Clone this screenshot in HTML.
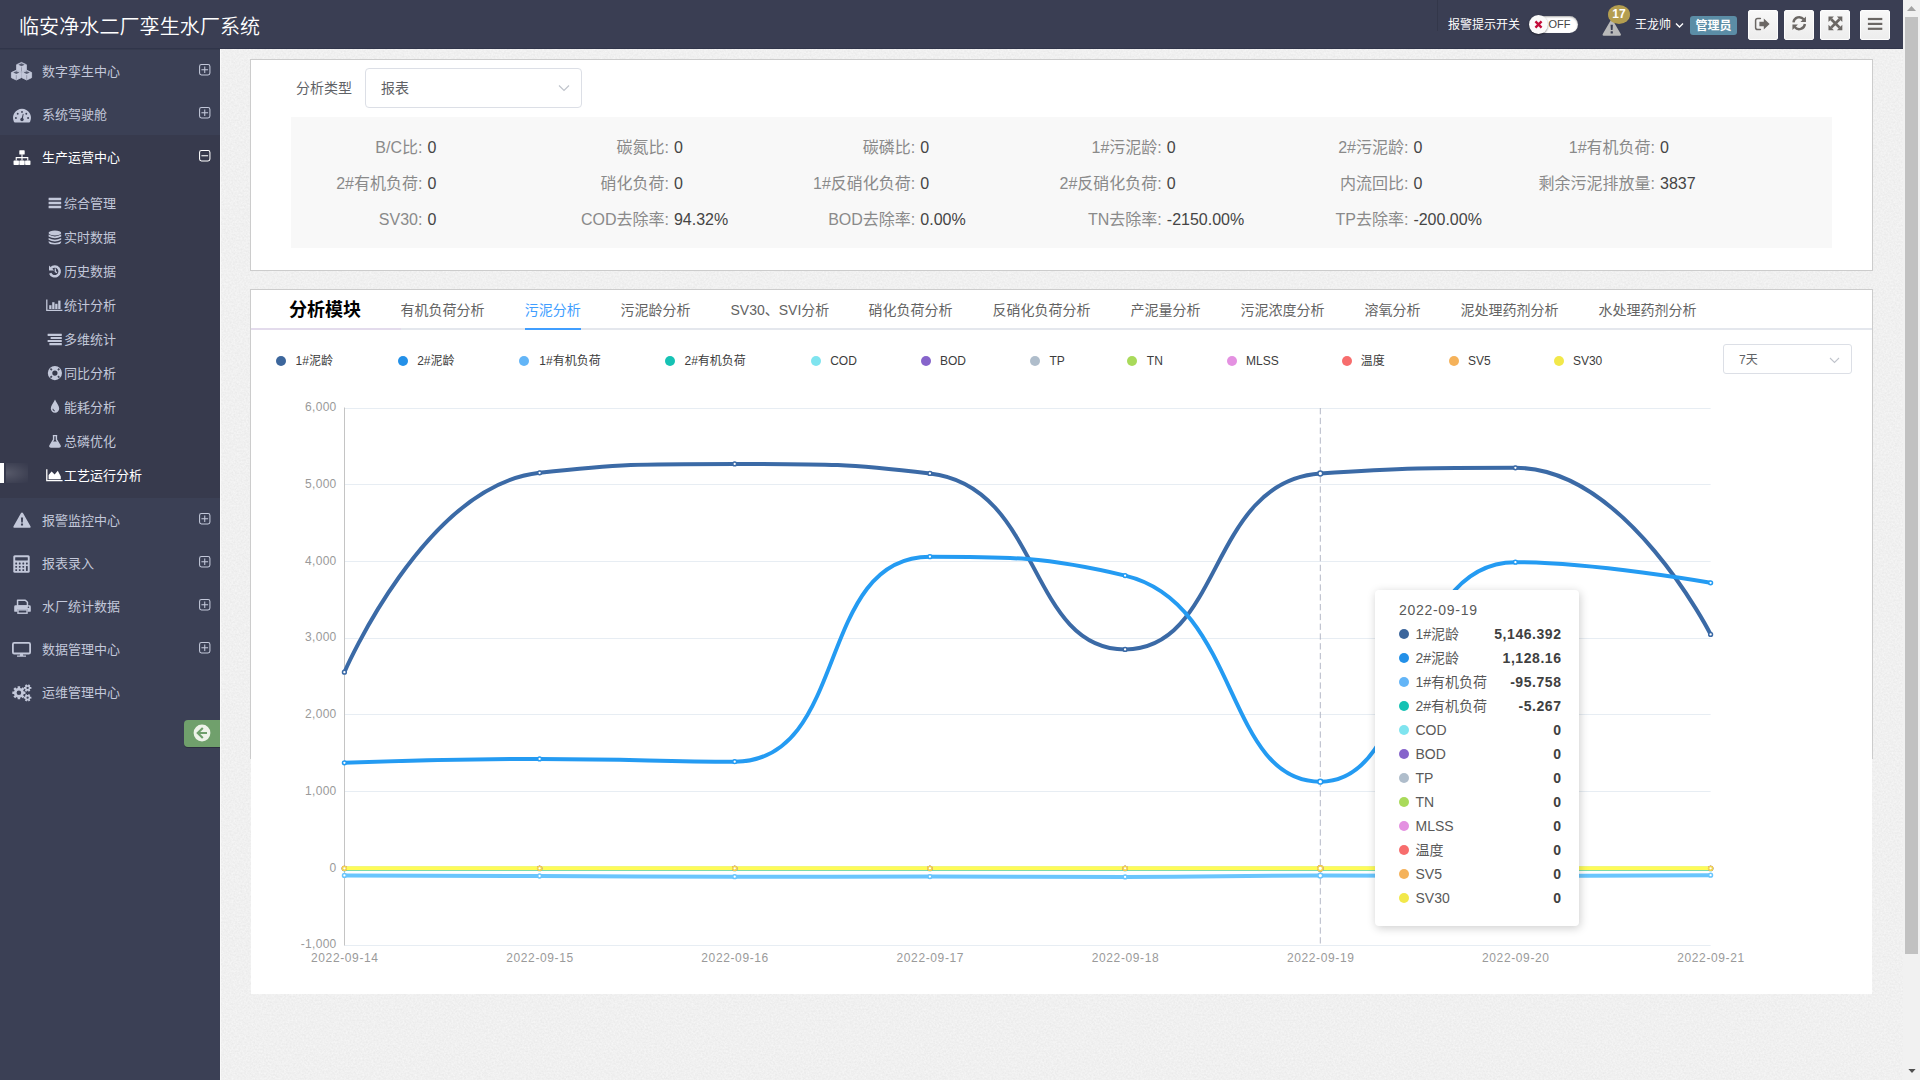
<!DOCTYPE html>
<html lang="zh-CN">
<head>
<meta charset="utf-8">
<title>临安净水二厂孪生水厂系统</title>
<style>
*{box-sizing:border-box;margin:0;padding:0}
html,body{width:1920px;height:1080px;overflow:hidden}
body{font-family:"Liberation Sans","Noto Sans CJK SC",sans-serif;background:#f0f0f0;position:relative;color:#333}
svg{display:block;overflow:visible}
.a{position:absolute}
#hdr{position:absolute;left:0;top:0;width:1903px;height:49px;background:#3a3e53;border-bottom:1px solid #30354a;z-index:5}
#hdrsh{position:absolute;left:0;top:49px;width:220px;height:1px;background:rgba(0,0,0,.08);z-index:6}
#hdr .title{position:absolute;left:19px;top:13px;font-size:20px;line-height:28px;color:#fff;font-weight:350;white-space:nowrap;letter-spacing:.1px}
#side{position:absolute;left:0;top:49px;width:220px;height:1031px;background:#3b4055;z-index:3}
#sideline{position:absolute;left:220px;top:49px;width:1px;height:1031px;background:#fafafa;z-index:3}
#sub{position:absolute;left:0;top:135px;width:220px;height:363px;background:#373a4d;z-index:3}
.mi{position:absolute;left:0;width:220px;height:43px;color:#c3c8da;font-size:13px;line-height:43px;z-index:4}
.mi .ic{position:absolute;color:#c3c8da}
.mi .tx{position:absolute;left:42px;top:1px;white-space:nowrap}
.mi .pm{position:absolute;left:199px;top:14.6px;width:11.5px;height:11.5px}
.mi.act,.mi.act .ic{color:#fff}
.si{position:absolute;left:0;width:220px;height:34px;line-height:34px;font-size:13px;color:#c3c8da;z-index:4}
.si .ic{position:absolute;left:46px;top:9px;width:17px;height:16px}
.si .tx{position:absolute;left:64px;top:.5px;white-space:nowrap}
.si.act{color:#fff}
.panel{position:absolute;background:#fff;border:1px solid #cccccc}
.hb{position:absolute;top:10px;width:30px;height:30px;border-radius:2px;background:linear-gradient(#f8f8f8,#ededed);border:1px solid #fdfdfd;color:#6b6764}
.hb svg{position:absolute;left:5.2px;top:4.6px}
.lg{position:absolute;top:352.5px;height:16px;line-height:16px;font-size:12px;color:#3c3c3c;white-space:nowrap}
.dot{position:absolute;width:10px;height:10px;border-radius:50%;top:355.8px}
.tab{position:absolute;top:299px;height:22px;line-height:22px;font-size:14px;color:#636363;white-space:nowrap}
.st{position:absolute;height:36px;line-height:36px;font-size:16px;white-space:nowrap}
.st.l{color:#8a8a8a;text-align:right;width:140px}
.st.v{color:#454545}
.tr{position:absolute;left:1375px;width:204px;height:24px;line-height:24px;font-size:14px;color:#595959}
.tr i{position:absolute;left:24px;top:7px;width:10px;height:10px;border-radius:50%}
.tr span{position:absolute;left:40.5px;top:0;white-space:nowrap}
.tr b{position:absolute;right:17.5px;top:0;color:#404040;font-weight:bold;white-space:nowrap;letter-spacing:.55px}
</style>
</head>
<body>
<svg class="a" style="left:221px;top:49px" width="1682" height="1031"><filter id="nz" x="0" y="0" width="100%" height="100%" color-interpolation-filters="sRGB"><feTurbulence type="fractalNoise" baseFrequency="0.55" numOctaves="2" seed="7"/><feColorMatrix type="matrix" values="0.07 0 0 0 0.906  0.07 0 0 0 0.906  0.07 0 0 0 0.906  0 0 0 0 1"/></filter><rect width="1682" height="1031" filter="url(#nz)"/></svg>
<div id="hdr"><div class="title">临安净水二厂孪生水厂系统</div>
<div class="a" style="left:1437px;top:0;width:1px;height:31px;background:#33374a"></div>
<div class="a" style="left:1448px;top:15px;font-size:12px;line-height:20px;color:#fff;white-space:nowrap">报警提示开关</div>
<div class="a" style="left:1530px;top:16px;width:48px;height:17px;border-radius:9px;background:#fff;box-shadow:inset 0 1px 2px rgba(0,0,0,.35)"></div>
<div class="a" style="left:1548.5px;top:14.5px;font-size:11px;line-height:18px;color:#444;white-space:nowrap">OFF</div>
<div class="a" style="left:1528.5px;top:14.5px;width:19px;height:19px;border-radius:50%;background:#fbfbfb;box-shadow:0 1px 2px rgba(0,0,0,.45)"></div>
<div class="a" style="left:1533.7px;top:19.6px;color:#c30d3a"><svg viewBox="0 0 10 10" width="9" height="9" style=""><path d="M1.6,1.6 L8.4,8.4 M8.4,1.6 L1.6,8.4" stroke="currentColor" stroke-width="2.6" stroke-linecap="butt"/></svg></div>
<div class="a" style="left:1601px;top:19px;color:#b9b9b9"><svg viewBox="0 0 18 16" width="21.5" height="17" style=""><path d="M9,0.6 Q9.7,0.6 10.1,1.3 L17.6,14.4 Q18,15.6 16.7,15.7 H1.3 Q0,15.6 0.4,14.4 L7.9,1.3 Q8.3,0.6 9,0.6Z" fill="currentColor"/><path d="M7.9,5.4 H10.1 L9.8,10.4 H8.2Z" fill="#3a3e53"/><rect x="7.95" y="11.5" width="2.1" height="2.1" rx="0.3" fill="#3a3e53"/></svg></div>
<div class="a" style="left:1608px;top:5px;width:22px;height:19px;border-radius:50%;background:#b49e50;color:#fff;font-size:12px;font-weight:bold;line-height:18px;text-align:center">17</div>
<div class="a" style="left:1635px;top:15px;font-size:12px;line-height:20px;color:#fff;white-space:nowrap">王龙帅</div>
<svg class="a" style="left:1674.5px;top:22px" width="9" height="7" viewBox="0 0 9 7"><path d="M1,1.5 L4.5,5 L8,1.5" fill="none" stroke="#fff" stroke-width="1.4"/></svg>
<div class="a" style="left:1690px;top:16px;width:47px;height:19px;border-radius:3px;background:#5b8da6;color:#fff;font-size:12px;font-weight:bold;line-height:20px;text-align:center">管理员</div>
<div class="hb" style="left:1748px"><svg viewBox="0 0 16 16" width="16" height="16" style="left:5.2px;top:4.6px"><path d="M6.4,2.4 H3.8 Q1.6,2.4 1.6,4.6 V11.4 Q1.6,13.6 3.8,13.6 H6.4" fill="none" stroke="currentColor" stroke-width="1.5" stroke-linecap="round"/><path d="M5.4,5.8 H9.8 V2.6 L15.6,8 L9.8,13.4 V10.2 H5.4Z" fill="currentColor"/></svg></div>
<div class="hb" style="left:1784px"><svg viewBox="0 0 16 16" width="16.4" height="16.4" style="left:6.0px;top:4.4px"><path d="M2.4,7.2 A5.7,5.7 0 0 1 12.4,4.2" fill="none" stroke="currentColor" stroke-width="2.3"/><path d="M14.6,1.4 V6.8 H9.2Z" fill="currentColor"/><path d="M13.6,8.8 A5.7,5.7 0 0 1 3.6,11.8" fill="none" stroke="currentColor" stroke-width="2.3"/><path d="M1.4,14.6 V9.2 H6.8Z" fill="currentColor"/></svg></div>
<div class="hb" style="left:1820px"><svg viewBox="0 0 16 16" width="16.8" height="16.8" style="left:5.9px;top:4.2px"><path d="M4,4 L12,12 M12,4 L4,12" stroke="currentColor" stroke-width="2.6"/><path d="M1.4,1.4 H6.6 L1.4,6.6Z M14.6,1.4 V6.6 L9.4,1.4Z M1.4,14.6 V9.4 L6.6,14.6Z M14.6,14.6 H9.4 L14.6,9.4Z" fill="currentColor"/></svg></div>
<div class="hb" style="left:1860px"><svg viewBox="0 0 16 16" width="16" height="16" style="left:6.2px;top:4.8px"><rect x="0.9" y="1.9" width="14.4" height="2.2" fill="currentColor"/><rect x="0.9" y="6.8" width="14.4" height="2.2" fill="currentColor"/><rect x="0.9" y="11.7" width="14.4" height="2.2" fill="currentColor"/></svg></div>
</div><div id="hdrsh"></div>
<div id="side"></div><div id="sideline"></div><div id="sub"></div>
<div class="mi" style="top:49px"><span class="ic" style="left:11px;top:13.1px"><svg viewBox="0 0 21 18" width="21" height="18" style=""><polygon points="10.50,0.40 15.40,2.70 15.40,7.90 10.50,10.20 5.60,7.90 5.60,2.70" fill="currentColor" stroke="currentColor" stroke-width="0.8" stroke-linejoin="round"/><polygon points="10.50,1.35 13.60,2.80 10.50,4.25 7.40,2.80" fill="#3b4055" opacity=".8"/><path d="M10.50,5.30 V9.60" fill="none" stroke="#3b4055" stroke-width="0.7" opacity=".5"/><polygon points="5.30,8.20 10.20,10.50 10.20,15.70 5.30,18.00 0.40,15.70 0.40,10.50" fill="currentColor" stroke="currentColor" stroke-width="0.8" stroke-linejoin="round"/><polygon points="5.30,9.15 8.40,10.60 5.30,12.05 2.20,10.60" fill="#3b4055" opacity=".8"/><path d="M5.30,13.10 V17.40" fill="none" stroke="#3b4055" stroke-width="0.7" opacity=".5"/><polygon points="15.70,8.20 20.60,10.50 20.60,15.70 15.70,18.00 10.80,15.70 10.80,10.50" fill="currentColor" stroke="currentColor" stroke-width="0.8" stroke-linejoin="round"/><polygon points="15.70,9.15 18.80,10.60 15.70,12.05 12.60,10.60" fill="#3b4055" opacity=".8"/><path d="M15.70,13.10 V17.40" fill="none" stroke="#3b4055" stroke-width="0.7" opacity=".5"/></svg></span><span class="tx">数字孪生中心</span><span class="pm"><svg viewBox="0 0 12 12" width="11.5" height="11.5" style=""><rect x="0.6" y="0.6" width="10.8" height="10.8" rx="2" fill="none" stroke="currentColor" stroke-width="1.1"/><path d="M2.5,6 H9.5" stroke="currentColor" stroke-width="1.1"/><path d="M6,2.5 V9.5" stroke="currentColor" stroke-width="1.1"/></svg></span></div>
<div class="mi" style="top:92px"><span class="ic" style="left:13px;top:16.9px"><svg viewBox="0 0 18 13.5" width="18" height="13.5" style=""><path d="M0.8,12.5 A9,9 0 1 1 17.2,12.5 Q16.9,13.4 16,13.4 H2 Q1.1,13.4 0.8,12.5Z" fill="currentColor"/><circle cx="2.9" cy="9" r="0.95" fill="#3b4055"/><circle cx="4.7" cy="4.7" r="0.95" fill="#3b4055"/><circle cx="9" cy="2.9" r="0.95" fill="#3b4055"/><circle cx="13.3" cy="4.7" r="0.95" fill="#3b4055"/><circle cx="15.1" cy="9" r="0.95" fill="#3b4055"/><path d="M9.9,4.8 L10.6,5 L9.9,9.6 L8.6,9.4Z" fill="#3b4055"/><circle cx="9" cy="10.5" r="1.7" fill="#3b4055"/></svg></span><span class="tx">系统驾驶舱</span><span class="pm"><svg viewBox="0 0 12 12" width="11.5" height="11.5" style=""><rect x="0.6" y="0.6" width="10.8" height="10.8" rx="2" fill="none" stroke="currentColor" stroke-width="1.1"/><path d="M2.5,6 H9.5" stroke="currentColor" stroke-width="1.1"/><path d="M6,2.5 V9.5" stroke="currentColor" stroke-width="1.1"/></svg></span></div>
<div class="mi act" style="top:135px"><span class="ic" style="left:13px;top:15.0px"><svg viewBox="0 0 18 16" width="18" height="15.4" style=""><rect x="6.2" y="0.2" width="5.6" height="4.6" rx="0.7" fill="currentColor"/><rect x="0.2" y="10.8" width="5.6" height="4.8" rx="0.7" fill="currentColor"/><rect x="6.2" y="10.8" width="5.6" height="4.8" rx="0.7" fill="currentColor"/><rect x="12.2" y="10.8" width="5.6" height="4.8" rx="0.7" fill="currentColor"/><path d="M9,4.5 V11 M3,11 V7.9 H15 V11" fill="none" stroke="currentColor" stroke-width="1.15"/></svg></span><span class="tx">生产运营中心</span><span class="pm"><svg viewBox="0 0 12 12" width="11.5" height="11.5" style=""><rect x="0.6" y="0.6" width="10.8" height="10.8" rx="2" fill="none" stroke="currentColor" stroke-width="1.1"/><path d="M2.5,6 H9.5" stroke="currentColor" stroke-width="1.1"/></svg></span></div>
<div class="si" style="top:186px"><span class="ic"><svg viewBox="0 0 17 16" width="17" height="16" style=""><rect x="2.6" y="2.8" width="12.6" height="2.5" rx="0.3" fill="currentColor"/><rect x="2.6" y="6.75" width="12.6" height="2.5" rx="0.3" fill="currentColor"/><rect x="2.6" y="10.7" width="12.6" height="2.5" rx="0.3" fill="currentColor"/></svg></span><span class="tx">综合管理</span></div>
<div class="si" style="top:220px"><span class="ic"><svg viewBox="0 0 17 16" width="17" height="16" style=""><ellipse cx="8.9" cy="4" rx="6.3" ry="2.5" fill="currentColor"/><path d="M2.6,5.6 Q8.9,9.2 15.2,5.6 V7.4 Q8.9,11 2.6,7.4Z" fill="currentColor"/><path d="M2.6,8.9 Q8.9,12.5 15.2,8.9 V10.7 Q8.9,14.3 2.6,10.7Z" fill="currentColor"/><path d="M2.6,12.2 Q8.9,15.8 15.2,12.2 V12.9 Q15.2,15.4 8.9,15.4 Q2.6,15.4 2.6,12.9Z" fill="currentColor"/></svg></span><span class="tx">实时数据</span></div>
<div class="si" style="top:254px"><span class="ic"><svg viewBox="0 0 17 16" width="17" height="16" style=""><path d="M5.1,5.2 A4.9,4.9 0 1 1 4.2,10.2" fill="none" stroke="currentColor" stroke-width="2.5"/><path d="M3,2.4 L3,7.6 L8.2,7.6Z" fill="currentColor"/><path d="M9.3,5.6 V8.6 L11,9.6" fill="none" stroke="currentColor" stroke-width="1.3"/></svg></span><span class="tx">历史数据</span></div>
<div class="si" style="top:288px"><span class="ic"><svg viewBox="0 0 17 16" width="17" height="16" style=""><path d="M0.8,2.6 V13.4 H16.4" fill="none" stroke="currentColor" stroke-width="1.3"/><rect x="3.2" y="8.2" width="2.3" height="3.8000000000000007" fill="currentColor"/><rect x="6.2" y="5.2" width="2.3" height="6.8" fill="currentColor"/><rect x="9.2" y="6.8" width="2.3" height="5.2" fill="currentColor"/><rect x="12.2" y="3.6" width="2.3" height="8.4" fill="currentColor"/></svg></span><span class="tx">统计分析</span></div>
<div class="si" style="top:322px"><span class="ic"><svg viewBox="0 0 17 16" width="17" height="16" style=""><rect x="1.6" y="2.8" width="14.200000000000001" height="2.1" rx="0.3" fill="currentColor"/><rect x="4.6" y="5.9" width="11.200000000000001" height="2.1" rx="0.3" fill="currentColor"/><rect x="1.6" y="9.0" width="14.200000000000001" height="2.1" rx="0.3" fill="currentColor"/><rect x="3.4" y="12.1" width="12.4" height="2.1" rx="0.3" fill="currentColor"/></svg></span><span class="tx">多维统计</span></div>
<div class="si" style="top:356px"><span class="ic"><svg viewBox="0 0 17 16" width="17" height="16" style=""><circle cx="8.9" cy="8.1" r="4.85" fill="none" stroke="currentColor" stroke-width="4.5"/><path d="M5.9,5.1 L4.4,3.6 M11.9,5.1 L13.4,3.6 M5.9,11.1 L4.4,12.6 M11.9,11.1 L13.4,12.6" stroke="#373a4d" stroke-width="1.7" opacity=".9"/></svg></span><span class="tx">同比分析</span></div>
<div class="si" style="top:390px"><span class="ic"><svg viewBox="0 0 17 16" width="17" height="16" style=""><path d="M9,0.6 C10.2,3.8 13.2,6.6 13.2,9.6 A4.2,4.2 0 0 1 4.8,9.6 C4.8,6.6 7.8,3.8 9,0.6Z" fill="currentColor"/><path d="M7,9.8 A1.9,1.9 0 0 0 8.8,11.9" fill="none" stroke="#373a4d" stroke-width="1"/></svg></span><span class="tx">能耗分析</span></div>
<div class="si" style="top:424px"><span class="ic"><svg viewBox="0 0 17 16" width="17" height="16" style=""><path d="M6.8,2.6 H11.2 M7.6,2.6 V6.6 L4,12.6 Q3.4,14 5,14 H13 Q14.6,14 14,12.6 L10.4,6.6 V2.6" fill="none" stroke="currentColor" stroke-width="1.4" stroke-linejoin="round"/><path d="M6.4,8.6 H11.6 L14,12.8 Q14.4,14 13.2,14 H4.8 Q3.6,14 4,12.8Z" fill="currentColor"/></svg></span><span class="tx">总磷优化</span></div>
<div class="si act" style="top:458px"><span class="ic"><svg viewBox="0 0 17 16" width="17" height="16" style=""><path d="M0.8,2.2 V13.6 H16.6" fill="none" stroke="currentColor" stroke-width="1.3"/><path d="M2.6,12.2 V8 L5.6,4.6 L8.6,7.6 L11.8,3.8 L14.8,9.4 V12.2Z" fill="currentColor"/></svg></span><span class="tx">工艺运行分析</span></div>
<div class="a" style="left:0;top:463px;width:4px;height:20px;background:#fff;z-index:4"></div>
<div class="a" style="left:6px;top:463px;width:22px;height:20px;background:radial-gradient(ellipse at 0% 50%,rgba(255,255,255,.16),rgba(255,255,255,.04) 70%,rgba(255,255,255,0) 100%);z-index:4"></div>
<div class="mi" style="top:498px"><span class="ic" style="left:13px;top:13.5px"><svg viewBox="0 0 18 16" width="18" height="16" style=""><path d="M9,0.6 Q9.7,0.6 10.1,1.3 L17.6,14.4 Q18,15.6 16.7,15.7 H1.3 Q0,15.6 0.4,14.4 L7.9,1.3 Q8.3,0.6 9,0.6Z" fill="currentColor"/><path d="M7.9,5.4 H10.1 L9.8,10.4 H8.2Z" fill="#3b4055"/><rect x="7.95" y="11.5" width="2.1" height="2.1" rx="0.3" fill="#3b4055"/></svg></span><span class="tx">报警监控中心</span><span class="pm"><svg viewBox="0 0 12 12" width="11.5" height="11.5" style=""><rect x="0.6" y="0.6" width="10.8" height="10.8" rx="2" fill="none" stroke="currentColor" stroke-width="1.1"/><path d="M2.5,6 H9.5" stroke="currentColor" stroke-width="1.1"/><path d="M6,2.5 V9.5" stroke="currentColor" stroke-width="1.1"/></svg></span></div>
<div class="mi" style="top:541px"><span class="ic" style="left:13px;top:14.0px"><svg viewBox="0 0 17 18" width="17" height="18" style=""><rect x="0.3" y="0.3" width="16.4" height="17.4" rx="1.5" fill="currentColor"/><rect x="2.2" y="2.2" width="12.6" height="3.2" rx="0.4" fill="#3b4055"/><rect x="2.30" y="7.60" width="1.8" height="1.8" rx="0.4" fill="#3b4055"/><rect x="5.85" y="7.60" width="1.8" height="1.8" rx="0.4" fill="#3b4055"/><rect x="9.40" y="7.60" width="1.8" height="1.8" rx="0.4" fill="#3b4055"/><rect x="12.95" y="7.60" width="1.8" height="1.8" rx="0.4" fill="#3b4055"/><rect x="2.30" y="10.90" width="1.8" height="1.8" rx="0.4" fill="#3b4055"/><rect x="5.85" y="10.90" width="1.8" height="1.8" rx="0.4" fill="#3b4055"/><rect x="9.40" y="10.90" width="1.8" height="1.8" rx="0.4" fill="#3b4055"/><rect x="12.95" y="10.90" width="1.8" height="5.1" rx="0.4" fill="#3b4055"/><rect x="2.30" y="14.20" width="1.8" height="1.8" rx="0.4" fill="#3b4055"/><rect x="5.85" y="14.20" width="1.8" height="1.8" rx="0.4" fill="#3b4055"/><rect x="9.40" y="14.20" width="1.8" height="1.8" rx="0.4" fill="#3b4055"/></svg></span><span class="tx">报表录入</span><span class="pm"><svg viewBox="0 0 12 12" width="11.5" height="11.5" style=""><rect x="0.6" y="0.6" width="10.8" height="10.8" rx="2" fill="none" stroke="currentColor" stroke-width="1.1"/><path d="M2.5,6 H9.5" stroke="currentColor" stroke-width="1.1"/><path d="M6,2.5 V9.5" stroke="currentColor" stroke-width="1.1"/></svg></span></div>
<div class="mi" style="top:584px"><span class="ic" style="left:13.8px;top:14.7px"><svg viewBox="0 0 17.2 14" width="17" height="15.4" style=""><path d="M3.6,0.4 H11.4 L13.6,2.6 V6.4 H3.6Z" fill="none" stroke="currentColor" stroke-width="1.5" stroke-linejoin="round"/><path d="M1.6,5.6 H15.6 Q17,5.6 17,7 V11.6 Q17,12 16.6,12 H13.8 V9.6 H3.4 V12 H0.6 Q0.2,12 0.2,11.6 V7 Q0.2,5.6 1.6,5.6Z" fill="currentColor"/><rect x="4" y="10.2" width="9.2" height="3.4" fill="none" stroke="currentColor" stroke-width="1.4"/><circle cx="14.6" cy="7.6" r="0.8" fill="#3b4055"/></svg></span><span class="tx">水厂统计数据</span><span class="pm"><svg viewBox="0 0 12 12" width="11.5" height="11.5" style=""><rect x="0.6" y="0.6" width="10.8" height="10.8" rx="2" fill="none" stroke="currentColor" stroke-width="1.1"/><path d="M2.5,6 H9.5" stroke="currentColor" stroke-width="1.1"/><path d="M6,2.5 V9.5" stroke="currentColor" stroke-width="1.1"/></svg></span></div>
<div class="mi" style="top:627px"><span class="ic" style="left:12px;top:15.3px"><svg viewBox="0 0 19 15" width="19" height="15" style=""><rect x="0.9" y="0.9" width="17.2" height="10.6" rx="1.3" fill="none" stroke="currentColor" stroke-width="1.8"/><path d="M8.2,11.6 L7.8,13.6 H11.2 L10.8,11.6Z M5,13.4 H14 V14.8 H5Z" fill="currentColor"/></svg></span><span class="tx">数据管理中心</span><span class="pm"><svg viewBox="0 0 12 12" width="11.5" height="11.5" style=""><rect x="0.6" y="0.6" width="10.8" height="10.8" rx="2" fill="none" stroke="currentColor" stroke-width="1.1"/><path d="M2.5,6 H9.5" stroke="currentColor" stroke-width="1.1"/><path d="M6,2.5 V9.5" stroke="currentColor" stroke-width="1.1"/></svg></span></div>
<div class="mi" style="top:670px"><span class="ic" style="left:12px;top:13.9px"><svg viewBox="0 0 19.5 17.6" width="19.5" height="17.6" style=""><polygon points="13.47,7.49 13.47,10.11 11.75,10.01 11.18,11.38 12.47,12.52 10.62,14.37 9.48,13.08 8.11,13.65 8.21,15.37 5.59,15.37 5.69,13.65 4.32,13.08 3.18,14.37 1.33,12.52 2.62,11.38 2.05,10.01 0.33,10.11 0.33,7.49 2.05,7.59 2.62,6.22 1.33,5.08 3.18,3.23 4.32,4.52 5.69,3.95 5.59,2.23 8.21,2.23 8.11,3.95 9.48,4.52 10.62,3.23 12.47,5.08 11.18,6.22 11.75,7.59" fill="currentColor"/><circle cx="6.9" cy="8.8" r="2.3" fill="#3b4055"/><polygon points="19.37,2.89 19.37,4.91 18.25,4.79 17.70,5.75 18.36,6.66 16.61,7.67 16.15,6.64 15.05,6.64 14.59,7.67 12.84,6.66 13.50,5.75 12.95,4.79 11.83,4.91 11.83,2.89 12.95,3.01 13.50,2.05 12.84,1.14 14.59,0.13 15.05,1.16 16.15,1.16 16.61,0.13 18.36,1.14 17.70,2.05 18.25,3.01" fill="currentColor"/><circle cx="15.6" cy="3.9" r="1.15" fill="#3b4055"/><polygon points="19.37,12.69 19.37,14.71 18.25,14.59 17.70,15.55 18.36,16.46 16.61,17.47 16.15,16.44 15.05,16.44 14.59,17.47 12.84,16.46 13.50,15.55 12.95,14.59 11.83,14.71 11.83,12.69 12.95,12.81 13.50,11.85 12.84,10.94 14.59,9.93 15.05,10.96 16.15,10.96 16.61,9.93 18.36,10.94 17.70,11.85 18.25,12.81" fill="currentColor"/><circle cx="15.6" cy="13.7" r="1.15" fill="#3b4055"/></svg></span><span class="tx">运维管理中心</span></div>
<div class="a" style="left:184px;top:720px;width:36px;height:27px;border-radius:4px 0 0 4px;background:#70a06c;color:#eef3ea;box-shadow:0 1px 0 rgba(0,0,0,.25);z-index:4"><div class="a" style="left:9px;top:4.2px"><svg viewBox="0 0 18 18" width="18" height="18" style=""><circle cx="9" cy="9" r="8.4" fill="currentColor"/><path d="M14,9 H5.6 M9.8,3.9 L4.7,9 L9.8,14.1" fill="none" stroke="#6f9f6c" stroke-width="2.1" stroke-linejoin="miter"/></svg></div></div>
<div class="a" style="left:1903px;top:0;width:17px;height:1080px;background:#f1f1f1"></div>
<div class="a" style="left:1905px;top:17px;width:13px;height:937px;background:#c1c1c1"></div>
<svg class="a" style="left:1907px;top:6px" width="9" height="5" viewBox="0 0 9 5"><path d="M0,5 L4.5,0 L9,5Z" fill="#a3a3a3"/></svg>
<svg class="a" style="left:1907.5px;top:1069px" width="8" height="4" viewBox="0 0 9 5"><path d="M0,0 L4.5,5 L9,0Z" fill="#505050"/></svg>
<div class="panel" style="left:250px;top:59px;width:1623px;height:212px"></div>
<div class="a" style="left:296px;top:78px;font-size:14px;line-height:20px;color:#606266;white-space:nowrap">分析类型</div>
<div class="a" style="left:365px;top:68px;width:217px;height:40px;border:1px solid #dcdfe6;border-radius:4px;background:#fff"></div>
<div class="a" style="left:381px;top:78px;font-size:14px;line-height:20px;color:#606266">报表</div>
<svg class="a" style="left:558px;top:84px" width="12" height="8" viewBox="0 0 12 8"><path d="M1,1.5 L6,6.5 L11,1.5" fill="none" stroke="#c0c4cc" stroke-width="1.2"/></svg>
<div class="a" style="left:291px;top:116.5px;width:1541px;height:131.3px;background:#f8f8f8"></div>
<div class="st l" style="left:282.4px;top:130px">B/C比:</div><div class="st v" style="left:427.4px;top:130px">0</div>
<div class="st l" style="left:528.9px;top:130px">碳氮比:</div><div class="st v" style="left:673.9px;top:130px">0</div>
<div class="st l" style="left:775.3px;top:130px">碳磷比:</div><div class="st v" style="left:920.3px;top:130px">0</div>
<div class="st l" style="left:1021.8px;top:130px">1#污泥龄:</div><div class="st v" style="left:1166.8px;top:130px">0</div>
<div class="st l" style="left:1268.4px;top:130px">2#污泥龄:</div><div class="st v" style="left:1413.4px;top:130px">0</div>
<div class="st l" style="left:1515.0px;top:130px">1#有机负荷:</div><div class="st v" style="left:1660.0px;top:130px">0</div>
<div class="st l" style="left:282.4px;top:166px">2#有机负荷:</div><div class="st v" style="left:427.4px;top:166px">0</div>
<div class="st l" style="left:528.9px;top:166px">硝化负荷:</div><div class="st v" style="left:673.9px;top:166px">0</div>
<div class="st l" style="left:775.3px;top:166px">1#反硝化负荷:</div><div class="st v" style="left:920.3px;top:166px">0</div>
<div class="st l" style="left:1021.8px;top:166px">2#反硝化负荷:</div><div class="st v" style="left:1166.8px;top:166px">0</div>
<div class="st l" style="left:1268.4px;top:166px">内流回比:</div><div class="st v" style="left:1413.4px;top:166px">0</div>
<div class="st l" style="left:1515.0px;top:166px">剩余污泥排放量:</div><div class="st v" style="left:1660.0px;top:166px">3837</div>
<div class="st l" style="left:282.4px;top:202px">SV30:</div><div class="st v" style="left:427.4px;top:202px">0</div>
<div class="st l" style="left:528.9px;top:202px">COD去除率:</div><div class="st v" style="left:673.9px;top:202px">94.32%</div>
<div class="st l" style="left:775.3px;top:202px">BOD去除率:</div><div class="st v" style="left:920.3px;top:202px">0.00%</div>
<div class="st l" style="left:1021.8px;top:202px">TN去除率:</div><div class="st v" style="left:1166.8px;top:202px">-2150.00%</div>
<div class="st l" style="left:1268.4px;top:202px">TP去除率:</div><div class="st v" style="left:1413.4px;top:202px">-200.00%</div>
<div class="a" style="left:251px;top:289px;width:1621px;height:705px;background:#fff"></div>
<div class="a" style="left:250px;top:289px;width:1623px;height:470px;border:1px solid #cccccc;border-bottom:0"></div>
<div class="a" style="left:251px;top:328px;width:1621px;height:2px;background:#e4e7ed"></div>
<div class="a" style="left:251px;top:328px;width:150px;height:2px;background:#e3dbec"></div>
<div class="a" style="left:525px;top:328px;width:56px;height:2px;background:#409eff"></div>
<div class="a" style="left:289px;top:296px;font-size:18px;line-height:28px;font-weight:bold;color:#000;white-space:nowrap">分析模块</div>
<div class="tab" style="left:400.5px;">有机负荷分析</div>
<div class="tab" style="left:524.8px;color:#409eff;">污泥分析</div>
<div class="tab" style="left:620.5px;">污泥龄分析</div>
<div class="tab" style="left:730.5px;">SV30、SVI分析</div>
<div class="tab" style="left:868.5px;">硝化负荷分析</div>
<div class="tab" style="left:992.5px;">反硝化负荷分析</div>
<div class="tab" style="left:1130.5px;">产泥量分析</div>
<div class="tab" style="left:1240.5px;">污泥浓度分析</div>
<div class="tab" style="left:1364.5px;">溶氧分析</div>
<div class="tab" style="left:1460.5px;">泥处理药剂分析</div>
<div class="tab" style="left:1598.5px;">水处理药剂分析</div>
<div class="dot" style="left:276.1px;background:#3c669c"></div><div class="lg" style="left:295.6px">1#泥龄</div>
<div class="dot" style="left:397.7px;background:#2390e8"></div><div class="lg" style="left:417.2px">2#泥龄</div>
<div class="dot" style="left:519.4px;background:#63b5f7"></div><div class="lg" style="left:539.3px">1#有机负荷</div>
<div class="dot" style="left:665.4px;background:#16c2b4"></div><div class="lg" style="left:684.5px">2#有机负荷</div>
<div class="dot" style="left:811.2px;background:#7fe4ef"></div><div class="lg" style="left:830.2px">COD</div>
<div class="dot" style="left:921.0px;background:#8664cb"></div><div class="lg" style="left:940.0px">BOD</div>
<div class="dot" style="left:1030.4px;background:#afbdcb"></div><div class="lg" style="left:1049.4px">TP</div>
<div class="dot" style="left:1127.3px;background:#a9da5a"></div><div class="lg" style="left:1146.8px">TN</div>
<div class="dot" style="left:1227.0px;background:#e491e1"></div><div class="lg" style="left:1246.0px">MLSS</div>
<div class="dot" style="left:1341.7px;background:#f76d6d"></div><div class="lg" style="left:1360.7px">温度</div>
<div class="dot" style="left:1448.8px;background:#f5b25a"></div><div class="lg" style="left:1467.9px">SV5</div>
<div class="dot" style="left:1553.8px;background:#f2e84a"></div><div class="lg" style="left:1572.9px">SV30</div>
<div class="a" style="left:1723px;top:344px;width:129px;height:30px;border:1px solid #dcdfe6;border-radius:3px;background:#fff"></div>
<div class="a" style="left:1739px;top:351px;font-size:12px;line-height:18px;color:#606266">7天</div>
<svg class="a" style="left:1829px;top:357px" width="11" height="7" viewBox="0 0 11 7"><path d="M1,1 L5.5,5.5 L10,1" fill="none" stroke="#c0c4cc" stroke-width="1.1"/></svg>
<svg class="a" style="left:250px;top:380px" width="1622" height="614" viewBox="250 380 1622 614" font-family='"Liberation Sans","Noto Sans CJK SC",sans-serif' font-size="12"><line x1="344.4" x2="1710.6" y1="408.5" y2="408.5" stroke="#e7edf3" stroke-width="1"/><text x="336.6" y="411.3" text-anchor="end" fill="#9a9a9a" letter-spacing="0.3">6,000</text><line x1="344.4" x2="1710.6" y1="484.5" y2="484.5" stroke="#e7edf3" stroke-width="1"/><text x="336.6" y="488.0" text-anchor="end" fill="#9a9a9a" letter-spacing="0.3">5,000</text><line x1="344.4" x2="1710.6" y1="561.5" y2="561.5" stroke="#e7edf3" stroke-width="1"/><text x="336.6" y="564.7" text-anchor="end" fill="#9a9a9a" letter-spacing="0.3">4,000</text><line x1="344.4" x2="1710.6" y1="638.5" y2="638.5" stroke="#e7edf3" stroke-width="1"/><text x="336.6" y="641.4" text-anchor="end" fill="#9a9a9a" letter-spacing="0.3">3,000</text><line x1="344.4" x2="1710.6" y1="714.5" y2="714.5" stroke="#e7edf3" stroke-width="1"/><text x="336.6" y="718.2" text-anchor="end" fill="#9a9a9a" letter-spacing="0.3">2,000</text><line x1="344.4" x2="1710.6" y1="791.5" y2="791.5" stroke="#e7edf3" stroke-width="1"/><text x="336.6" y="794.9" text-anchor="end" fill="#9a9a9a" letter-spacing="0.3">1,000</text><line x1="344.4" x2="1710.6" y1="868.5" y2="868.5" stroke="#e7edf3" stroke-width="1"/><text x="336.6" y="871.6" text-anchor="end" fill="#9a9a9a" letter-spacing="0.3">0</text><line x1="344.4" x2="1710.6" y1="945.5" y2="945.5" stroke="#e7edf3" stroke-width="1"/><text x="336.6" y="948.3" text-anchor="end" fill="#9a9a9a" letter-spacing="0.3">-1,000</text><line x1="344.5" x2="344.5" y1="407.5" y2="945.5" stroke="#c4c4c4" stroke-width="1"/><text x="344.8" y="962.4" text-anchor="middle" fill="#9a9a9a" letter-spacing="0.62">2022-09-14</text><text x="540.0" y="962.4" text-anchor="middle" fill="#9a9a9a" letter-spacing="0.62">2022-09-15</text><text x="735.1" y="962.4" text-anchor="middle" fill="#9a9a9a" letter-spacing="0.62">2022-09-16</text><text x="930.3" y="962.4" text-anchor="middle" fill="#9a9a9a" letter-spacing="0.62">2022-09-17</text><text x="1125.5" y="962.4" text-anchor="middle" fill="#9a9a9a" letter-spacing="0.62">2022-09-18</text><text x="1320.7" y="962.4" text-anchor="middle" fill="#9a9a9a" letter-spacing="0.62">2022-09-19</text><text x="1515.8" y="962.4" text-anchor="middle" fill="#9a9a9a" letter-spacing="0.62">2022-09-20</text><text x="1711.0" y="962.4" text-anchor="middle" fill="#9a9a9a" letter-spacing="0.62">2022-09-21</text><line x1="1320.3" x2="1320.3" y1="408.0" y2="945.0" stroke="#b3b7c6" stroke-width="1" stroke-dasharray="6.3 3.5"/><path d="M344.4,672.2 C344.4,672.2 424.8,485.5 539.6,472.8 C620.0,463.9 637.2,463.9 734.7,463.9 C832.3,463.9 846.7,463.9 929.9,473.4 C1041.9,486.2 1027.5,649.4 1125.1,649.4 C1222.7,649.4 1208.3,481.1 1320.3,473.5 C1403.5,467.8 1431.1,467.8 1515.4,467.8 C1626.3,467.8 1710.6,634.4 1710.6,634.4" fill="none" stroke="#3b6aa6" stroke-width="4" stroke-linecap="butt" stroke-linejoin="round"/><path d="M344.4,762.8 C344.4,762.8 442.0,758.9 539.6,758.9 C637.2,758.9 655.1,761.7 734.7,761.7 C850.3,761.7 814.6,556.7 929.9,556.7 C1009.8,556.7 1045.3,556.7 1125.1,575.6 C1240.5,603.0 1224.3,781.7 1320.3,781.7 C1419.5,781.7 1398.4,562.2 1515.4,562.2 C1593.6,562.2 1710.6,582.8 1710.6,582.8" fill="none" stroke="#249bf2" stroke-width="4" stroke-linecap="butt" stroke-linejoin="round"/><path d="M344.4,875.4 C344.4,875.4 442.0,875.6 539.6,876.0 C637.2,876.3 637.2,876.7 734.7,876.7 C832.3,876.7 832.3,876.6 929.9,876.6 C1027.5,876.6 1027.5,876.9 1125.1,876.9 C1222.7,876.9 1222.7,875.6 1320.3,875.6 C1417.8,875.6 1417.8,876.0 1515.4,876.0 C1613.0,876.0 1710.6,875.2 1710.6,875.2" fill="none" stroke="#69c5fd" stroke-width="4" stroke-linecap="butt" stroke-linejoin="round"/><path d="M344.4,868.7 C344.4,868.7 442.0,868.7 539.6,868.7 C637.2,868.7 637.2,868.7 734.7,868.7 C832.3,868.7 832.3,868.7 929.9,868.7 C1027.5,868.7 1027.5,868.7 1125.1,868.7 C1222.7,868.7 1222.7,868.7 1320.3,868.7 C1417.8,868.7 1417.8,868.7 1515.4,868.7 C1613.0,868.7 1710.6,868.7 1710.6,868.7" fill="none" stroke="#16c2b4" stroke-width="4" stroke-linecap="butt" stroke-linejoin="round"/><path d="M344.4,868.3 C344.4,868.3 442.0,868.3 539.6,868.3 C637.2,868.3 637.2,868.3 734.7,868.3 C832.3,868.3 832.3,868.3 929.9,868.3 C1027.5,868.3 1027.5,868.3 1125.1,868.3 C1222.7,868.3 1222.7,868.3 1320.3,868.3 C1417.8,868.3 1417.8,868.3 1515.4,868.3 C1613.0,868.3 1710.6,868.3 1710.6,868.3" fill="none" stroke="#fffb57" stroke-width="4" stroke-linecap="butt" stroke-linejoin="round"/><circle cx="344.4" cy="672.2" r="1.9" fill="#fff" stroke="#3b6aa6" stroke-width="1.5"/><circle cx="539.6" cy="472.8" r="1.9" fill="#fff" stroke="#3b6aa6" stroke-width="1.5"/><circle cx="734.7" cy="463.9" r="1.9" fill="#fff" stroke="#3b6aa6" stroke-width="1.5"/><circle cx="929.9" cy="473.4" r="1.9" fill="#fff" stroke="#3b6aa6" stroke-width="1.5"/><circle cx="1125.1" cy="649.4" r="1.9" fill="#fff" stroke="#3b6aa6" stroke-width="1.5"/><circle cx="1320.3" cy="473.5" r="2.4" fill="#fff" stroke="#3b6aa6" stroke-width="1.5"/><circle cx="1515.4" cy="467.8" r="1.9" fill="#fff" stroke="#3b6aa6" stroke-width="1.5"/><circle cx="1710.6" cy="634.4" r="1.9" fill="#fff" stroke="#3b6aa6" stroke-width="1.5"/><circle cx="344.4" cy="762.8" r="1.9" fill="#fff" stroke="#249bf2" stroke-width="1.5"/><circle cx="539.6" cy="758.9" r="1.9" fill="#fff" stroke="#249bf2" stroke-width="1.5"/><circle cx="734.7" cy="761.7" r="1.9" fill="#fff" stroke="#249bf2" stroke-width="1.5"/><circle cx="929.9" cy="556.7" r="1.9" fill="#fff" stroke="#249bf2" stroke-width="1.5"/><circle cx="1125.1" cy="575.6" r="1.9" fill="#fff" stroke="#249bf2" stroke-width="1.5"/><circle cx="1320.3" cy="781.7" r="2.4" fill="#fff" stroke="#249bf2" stroke-width="1.5"/><circle cx="1515.4" cy="562.2" r="1.9" fill="#fff" stroke="#249bf2" stroke-width="1.5"/><circle cx="1710.6" cy="582.8" r="1.9" fill="#fff" stroke="#249bf2" stroke-width="1.5"/><circle cx="344.4" cy="875.4" r="1.9" fill="#fff" stroke="#69c5fd" stroke-width="1.5"/><circle cx="539.6" cy="876.0" r="1.9" fill="#fff" stroke="#69c5fd" stroke-width="1.5"/><circle cx="734.7" cy="876.7" r="1.9" fill="#fff" stroke="#69c5fd" stroke-width="1.5"/><circle cx="929.9" cy="876.6" r="1.9" fill="#fff" stroke="#69c5fd" stroke-width="1.5"/><circle cx="1125.1" cy="876.9" r="1.9" fill="#fff" stroke="#69c5fd" stroke-width="1.5"/><circle cx="1320.3" cy="875.6" r="2.4" fill="#fff" stroke="#69c5fd" stroke-width="1.5"/><circle cx="1515.4" cy="876.0" r="1.9" fill="#fff" stroke="#69c5fd" stroke-width="1.5"/><circle cx="1710.6" cy="875.2" r="1.9" fill="#fff" stroke="#69c5fd" stroke-width="1.5"/><circle cx="344.4" cy="868.7" r="1.9" fill="#fff" stroke="#16c2b4" stroke-width="1.5"/><circle cx="539.6" cy="868.7" r="1.9" fill="#fff" stroke="#16c2b4" stroke-width="1.5"/><circle cx="734.7" cy="868.7" r="1.9" fill="#fff" stroke="#16c2b4" stroke-width="1.5"/><circle cx="929.9" cy="868.7" r="1.9" fill="#fff" stroke="#16c2b4" stroke-width="1.5"/><circle cx="1125.1" cy="868.7" r="1.9" fill="#fff" stroke="#16c2b4" stroke-width="1.5"/><circle cx="1320.3" cy="868.7" r="2.4" fill="#fff" stroke="#16c2b4" stroke-width="1.5"/><circle cx="1515.4" cy="868.7" r="1.9" fill="#fff" stroke="#16c2b4" stroke-width="1.5"/><circle cx="1710.6" cy="868.7" r="1.9" fill="#fff" stroke="#16c2b4" stroke-width="1.5"/><circle cx="344.4" cy="868.3" r="1.9" fill="#fff" stroke="#7fe4ef" stroke-width="1.5"/><circle cx="539.6" cy="868.3" r="1.9" fill="#fff" stroke="#7fe4ef" stroke-width="1.5"/><circle cx="734.7" cy="868.3" r="1.9" fill="#fff" stroke="#7fe4ef" stroke-width="1.5"/><circle cx="929.9" cy="868.3" r="1.9" fill="#fff" stroke="#7fe4ef" stroke-width="1.5"/><circle cx="1125.1" cy="868.3" r="1.9" fill="#fff" stroke="#7fe4ef" stroke-width="1.5"/><circle cx="1320.3" cy="868.3" r="2.4" fill="#fff" stroke="#7fe4ef" stroke-width="1.5"/><circle cx="1515.4" cy="868.3" r="1.9" fill="#fff" stroke="#7fe4ef" stroke-width="1.5"/><circle cx="1710.6" cy="868.3" r="1.9" fill="#fff" stroke="#7fe4ef" stroke-width="1.5"/><circle cx="344.4" cy="868.3" r="1.9" fill="#fff" stroke="#8664cb" stroke-width="1.5"/><circle cx="539.6" cy="868.3" r="1.9" fill="#fff" stroke="#8664cb" stroke-width="1.5"/><circle cx="734.7" cy="868.3" r="1.9" fill="#fff" stroke="#8664cb" stroke-width="1.5"/><circle cx="929.9" cy="868.3" r="1.9" fill="#fff" stroke="#8664cb" stroke-width="1.5"/><circle cx="1125.1" cy="868.3" r="1.9" fill="#fff" stroke="#8664cb" stroke-width="1.5"/><circle cx="1320.3" cy="868.3" r="2.4" fill="#fff" stroke="#8664cb" stroke-width="1.5"/><circle cx="1515.4" cy="868.3" r="1.9" fill="#fff" stroke="#8664cb" stroke-width="1.5"/><circle cx="1710.6" cy="868.3" r="1.9" fill="#fff" stroke="#8664cb" stroke-width="1.5"/><circle cx="344.4" cy="868.3" r="1.9" fill="#fff" stroke="#afbdcb" stroke-width="1.5"/><circle cx="539.6" cy="868.3" r="1.9" fill="#fff" stroke="#afbdcb" stroke-width="1.5"/><circle cx="734.7" cy="868.3" r="1.9" fill="#fff" stroke="#afbdcb" stroke-width="1.5"/><circle cx="929.9" cy="868.3" r="1.9" fill="#fff" stroke="#afbdcb" stroke-width="1.5"/><circle cx="1125.1" cy="868.3" r="1.9" fill="#fff" stroke="#afbdcb" stroke-width="1.5"/><circle cx="1320.3" cy="868.3" r="2.4" fill="#fff" stroke="#afbdcb" stroke-width="1.5"/><circle cx="1515.4" cy="868.3" r="1.9" fill="#fff" stroke="#afbdcb" stroke-width="1.5"/><circle cx="1710.6" cy="868.3" r="1.9" fill="#fff" stroke="#afbdcb" stroke-width="1.5"/><circle cx="344.4" cy="868.3" r="1.9" fill="#fff" stroke="#a9da5a" stroke-width="1.5"/><circle cx="539.6" cy="868.3" r="1.9" fill="#fff" stroke="#a9da5a" stroke-width="1.5"/><circle cx="734.7" cy="868.3" r="1.9" fill="#fff" stroke="#a9da5a" stroke-width="1.5"/><circle cx="929.9" cy="868.3" r="1.9" fill="#fff" stroke="#a9da5a" stroke-width="1.5"/><circle cx="1125.1" cy="868.3" r="1.9" fill="#fff" stroke="#a9da5a" stroke-width="1.5"/><circle cx="1320.3" cy="868.3" r="2.4" fill="#fff" stroke="#a9da5a" stroke-width="1.5"/><circle cx="1515.4" cy="868.3" r="1.9" fill="#fff" stroke="#a9da5a" stroke-width="1.5"/><circle cx="1710.6" cy="868.3" r="1.9" fill="#fff" stroke="#a9da5a" stroke-width="1.5"/><circle cx="344.4" cy="868.3" r="1.9" fill="#fff" stroke="#e491e1" stroke-width="1.5"/><circle cx="539.6" cy="868.3" r="1.9" fill="#fff" stroke="#e491e1" stroke-width="1.5"/><circle cx="734.7" cy="868.3" r="1.9" fill="#fff" stroke="#e491e1" stroke-width="1.5"/><circle cx="929.9" cy="868.3" r="1.9" fill="#fff" stroke="#e491e1" stroke-width="1.5"/><circle cx="1125.1" cy="868.3" r="1.9" fill="#fff" stroke="#e491e1" stroke-width="1.5"/><circle cx="1320.3" cy="868.3" r="2.4" fill="#fff" stroke="#e491e1" stroke-width="1.5"/><circle cx="1515.4" cy="868.3" r="1.9" fill="#fff" stroke="#e491e1" stroke-width="1.5"/><circle cx="1710.6" cy="868.3" r="1.9" fill="#fff" stroke="#e491e1" stroke-width="1.5"/><circle cx="344.4" cy="868.3" r="1.9" fill="#fff" stroke="#f76d6d" stroke-width="1.5"/><circle cx="539.6" cy="868.3" r="1.9" fill="#fff" stroke="#f76d6d" stroke-width="1.5"/><circle cx="734.7" cy="868.3" r="1.9" fill="#fff" stroke="#f76d6d" stroke-width="1.5"/><circle cx="929.9" cy="868.3" r="1.9" fill="#fff" stroke="#f76d6d" stroke-width="1.5"/><circle cx="1125.1" cy="868.3" r="1.9" fill="#fff" stroke="#f76d6d" stroke-width="1.5"/><circle cx="1320.3" cy="868.3" r="2.4" fill="#fff" stroke="#f76d6d" stroke-width="1.5"/><circle cx="1515.4" cy="868.3" r="1.9" fill="#fff" stroke="#f76d6d" stroke-width="1.5"/><circle cx="1710.6" cy="868.3" r="1.9" fill="#fff" stroke="#f76d6d" stroke-width="1.5"/><circle cx="344.4" cy="868.3" r="1.9" fill="#fff" stroke="#f5b25a" stroke-width="1.5"/><circle cx="539.6" cy="868.3" r="1.9" fill="#fff" stroke="#f5b25a" stroke-width="1.5"/><circle cx="734.7" cy="868.3" r="1.9" fill="#fff" stroke="#f5b25a" stroke-width="1.5"/><circle cx="929.9" cy="868.3" r="1.9" fill="#fff" stroke="#f5b25a" stroke-width="1.5"/><circle cx="1125.1" cy="868.3" r="1.9" fill="#fff" stroke="#f5b25a" stroke-width="1.5"/><circle cx="1320.3" cy="868.3" r="2.4" fill="#fff" stroke="#f5b25a" stroke-width="1.5"/><circle cx="1515.4" cy="868.3" r="1.9" fill="#fff" stroke="#f5b25a" stroke-width="1.5"/><circle cx="1710.6" cy="868.3" r="1.9" fill="#fff" stroke="#f5b25a" stroke-width="1.5"/><circle cx="344.4" cy="868.3" r="1.9" fill="#fff" stroke="#f0d64e" stroke-width="1.5"/><circle cx="539.6" cy="868.3" r="1.9" fill="#fff" stroke="#f0d64e" stroke-width="1.5"/><circle cx="734.7" cy="868.3" r="1.9" fill="#fff" stroke="#f0d64e" stroke-width="1.5"/><circle cx="929.9" cy="868.3" r="1.9" fill="#fff" stroke="#f0d64e" stroke-width="1.5"/><circle cx="1125.1" cy="868.3" r="1.9" fill="#fff" stroke="#f0d64e" stroke-width="1.5"/><circle cx="1320.3" cy="868.3" r="2.4" fill="#fff" stroke="#f0d64e" stroke-width="1.5"/><circle cx="1515.4" cy="868.3" r="1.9" fill="#fff" stroke="#f0d64e" stroke-width="1.5"/><circle cx="1710.6" cy="868.3" r="1.9" fill="#fff" stroke="#f0d64e" stroke-width="1.5"/></svg>
<div class="a" style="left:1375px;top:590px;width:204px;height:336px;background:#fff;border-radius:4px;box-shadow:1px 2px 10px rgba(0,0,0,.2)"></div>
<div class="a" style="left:1399px;top:598px;font-size:14px;line-height:24px;color:#595959;letter-spacing:.7px;white-space:nowrap">2022-09-19</div>
<div class="tr" style="top:621.5px"><i style="background:#3c669c"></i><span>1#泥龄</span><b>5,146.392</b></div>
<div class="tr" style="top:645.5px"><i style="background:#2390e8"></i><span>2#泥龄</span><b>1,128.16</b></div>
<div class="tr" style="top:669.5px"><i style="background:#63b5f7"></i><span>1#有机负荷</span><b>-95.758</b></div>
<div class="tr" style="top:693.5px"><i style="background:#16c2b4"></i><span>2#有机负荷</span><b>-5.267</b></div>
<div class="tr" style="top:717.5px"><i style="background:#7fe4ef"></i><span>COD</span><b>0</b></div>
<div class="tr" style="top:741.5px"><i style="background:#8664cb"></i><span>BOD</span><b>0</b></div>
<div class="tr" style="top:765.5px"><i style="background:#afbdcb"></i><span>TP</span><b>0</b></div>
<div class="tr" style="top:789.5px"><i style="background:#a9da5a"></i><span>TN</span><b>0</b></div>
<div class="tr" style="top:813.5px"><i style="background:#e491e1"></i><span>MLSS</span><b>0</b></div>
<div class="tr" style="top:837.5px"><i style="background:#f76d6d"></i><span>温度</span><b>0</b></div>
<div class="tr" style="top:861.5px"><i style="background:#f5b25a"></i><span>SV5</span><b>0</b></div>
<div class="tr" style="top:885.5px"><i style="background:#f2e84a"></i><span>SV30</span><b>0</b></div>
</body>
</html>
